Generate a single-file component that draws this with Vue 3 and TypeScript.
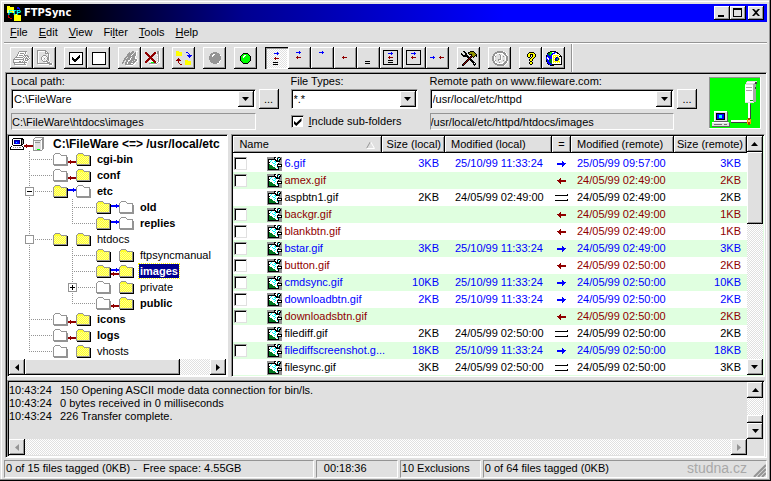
<script setup lang="ts">
import { h, ref, type FunctionalComponent } from 'vue'

type Dir = 'left' | 'right' | 'both' | 'none'

const palette: Record<string, string> = {
  k: '#000', w: '#fff', g: '#949494', l: '#e0e0e0', y: '#ff0', Y: '#909000', b: '#00f',
  n: '#000090', r: '#900000', G: '#0f0', d: '#007820', c: '#0ff', t: '#008888', o: '#f90',
}

/* Draws a small bitmap glyph, one rect for each run of equal cells. */
const Pix: FunctionalComponent<{ rows: string[] }> = ({ rows }) => {
  const rects = rows.flatMap((row, y) =>
    [...row.matchAll(/([a-zA-Z])\1*/g)].map((m) =>
      h('rect', { x: m.index, y, width: m[0].length, height: 1, fill: palette[m[1]] }),
    ),
  )
  return h(
    'svg',
    { width: rows[0].length, height: rows.length, 'shape-rendering': 'crispEdges', 'aria-hidden': 'true' },
    rects,
  )
}
Pix.props = ['rows']

const art: Record<string, string[]> = {
  print: [
    '......gggggggg...',
    '.....gwwwwwwgw...',
    '.....gwggggwgw...',
    '....gwwwwwwgw....',
    '....gwggggwgggg..',
    '...gwwwwwwgwgwgg.',
    '..ggggggggwgwgwgw',
    '.gwwwwwwwwgwgggwg',
    'gggggggggggwgwggw',
    'gwwwwwwwwwgwgggw.',
    'gwwwwwggwgwgwww..',
    'ggggggggggggggw..',
    '.gwwwwwwwwwgww...',
    '.ggggggggggggw...',
    '..wwwwwwwwwwww...',
  ],
  preview: [
    'ggggggggg.......',
    'gwwwwwwwgg......',
    'gw......gwg.....',
    'gw......gggg....',
    'gw........wgw...',
    'gw....ggg..gw...',
    'gw...gwwwg.gw...',
    'gw..gw.w.wggw...',
    'gw..gwwgw.ggw...',
    'gw..gw...wggw...',
    'gw...gw.wg.gw...',
    'gw....gggggw....',
    'gw......wwgggw..',
    'gggggggggggggggw',
    '.wwwwwwwwwwwgggw',
    '.............ww.',
  ],
  tick: [
    'kkkkkkkkkkkkkk',
    'kwwwwwwwwwwwwk',
    'kwwwwwwwwwwwwk',
    'kwwwwwwwwwkwwk',
    'kwwwwwwwwkkwwk',
    'kwwkwwwwkkkwwk',
    'kwwkkwwkkkwwwk',
    'kwwkkkkkkwwwwk',
    'kwwwkkkkwwwwwk',
    'kwwwwkkwwwwwwk',
    'kwwwwwwwwwwwwk',
    'kwwwwwwwwwwwwk',
    'kkkkkkkkkkkkkk',
  ],
  untick: [
    'kkkkkkkkkkkkkk',
    'kwwwwwwwwwwwwk',
    'kwwwwwwwwwwwwk',
    'kwwwwwwwwwwwwk',
    'kwwwwwwwwwwwwk',
    'kwwwwwwwwwwwwk',
    'kwwwwwwwwwwwwk',
    'kwwwwwwwwwwwwk',
    'kwwwwwwwwwwwwk',
    'kwwwwwwwwwwwwk',
    'kwwwwwwwwwwwwk',
    'kwwwwwwwwwwwwk',
    'kkkkkkkkkkkkkk',
  ],
  connect: [
    '..........gg..ww',
    '.......g.ggg.gw.',
    '......ggggg.ggw.',
    '.....gggggwgggw.',
    '.....ggggwggggw.',
    '....gggggggggw..',
    '...gg.gggwgggw..',
    '..gg.gggwggggww.',
    '..ggggggwggggggw',
    '.gg.ggwwgggg.ggw',
    '.g..gg.ggg.gggww',
    'gg.ggwgggggggw..',
    'g..ggwgggwwgww..',
    '...ggggggggww...',
    '....wwwwwww.....',
  ],
  disconnect: [
    '..........llggw.',
    'rr.......rrwggw.',
    'rrr.....rrrlggw.',
    '.rrr...rrr.wlgw.',
    '..rrr.rrr..lwgw.',
    '...rrrrr...llgw.',
    '....rrr....lwgw.',
    '...rrrrr...llgw.',
    '..rrr.rrr..lwgw.',
    '.rrr...rrr.llgw.',
    'rrr.wwwwrrrlwgw.',
    'rr..llGGGrrwgww.',
    '....ggggggggw...',
    '.....wwwwwww....',
  ],
  sync: [
    'yyy.............',
    'yyyyyy....bb....',
    'yyyyyy......b...',
    'yyyyyy.......b..',
    'yyyyyy.....bbbbb',
    '............bbb.',
    '.............b..',
    '..r.............',
    '.rrr............',
    'rrrrr....yyy....',
    '..r......yyyyyy.',
    '..r......yyyyyy.',
    '...r.....yyyyyy.',
    '....rr...yyyyyy.',
  ],
  stop: [
    '....gggg....',
    '..gggggggg..',
    '.gggwwggggg.',
    '.ggwwggggggw',
    'gggwgggggggg',
    'gggggggggggg',
    'gggggggggggg',
    'gggggggggggg',
    '.ggggggggggw',
    '.gggggggggw.',
    '..ggggggggw.',
    '....ggggww..',
  ],
  go: [
    '...kkkkk...',
    '..kGGGGGk..',
    '.kGGwwGGGk.',
    'kGGwwGGGGGk',
    'kGGwGGGGGGk',
    'kGGGGGGGGGk',
    'kGGGGGGGGGk',
    'kGGGGGGGGGk',
    '.kGGGGGGGk.',
    '..kGGGGGk..',
    '...kkkkk...',
  ],
  tools: [
    '..kk.....kkkk...',
    '...kk..kkYYYYk..',
    'k...kk.kYYYYYYk.',
    'kk..kk..kkkYYYYk',
    '.kkkkkk...kYYYkk',
    '..kkkkkk.krkYk.k',
    '......kkkrk.k...',
    '.......krk......',
    '......krkkk.....',
    '.....krk.kkk....',
    '....krk...kkk...',
    '...krk.....kkk..',
    '..krk.......kwk.',
    '.krk........kkk.',
    '.kk..........k..',
  ],
  clock: [
    '.....ggggggw....',
    '...ggggggggggw..',
    '..gggwwwwwwgggw.',
    '.ggwwllgllwwggw.',
    '.ggwllllgwllwggw',
    'ggwgllllgwlglwgg',
    'ggwlllllgwlllwgg',
    'ggwlllllgwlllwgg',
    'ggwlllgggwlllwgg',
    'ggwgllgwwllglwgg',
    '.ggwlllllllllggw',
    '.ggwwllgllwwgggw',
    '..gggwwwwwwgggw.',
    '...ggggggggggw..',
    '.....gggggggw...',
  ],
  help: [
    '...kkkkk..',
    '..kyyyyyk.',
    '.kyykkkyyk',
    '.kyyk.kyyk',
    '.kyyk.kyyk',
    '..kk.kyyk.',
    '....kyyk..',
    '...kyyk...',
    '...kyyk...',
    '....kk....',
    '...kyyk...',
    '...kyyk...',
    '....kk....',
  ],
  globe: [
    '....kkkkkk......',
    '..kkGGwwbbkk....',
    '.kddGGbbbwwkk...',
    '.bddGbbwwwwwwk..',
    'kbbddbwyyyyyywk.',
    'kbbbbbwywywywkkk',
    'bwbbbbwyyynnywwk',
    'bwwbbbwywnbtnywk',
    'bbwbddwyynbGnywk',
    'kbbdddwywnnnywwk',
    'kbbdddwyyyyyyywk',
    '.bbbddwywywywywk',
    '.kbbbdwwwwwwwwwk',
    '..kbbbkkkkkkkkkk',
    '....kkkk........',
  ],
  image: [
    'gggggggkkwgkkgg',
    'gggggggkwwkcwkg',
    'gkkkkkkkkwkwkkg',
    'gkwwcwwwkkktkgg',
    'gkwcwwwcckkkkgg',
    'gkkwwcwwcwwwggg',
    'gkwwwwccwwwkggg',
    'gkdwwwwwcwkkkkk',
    'gkdddwwcwwkwwwk',
    'gkddddwwwwkkkkk',
    'gkddddddwwckggg',
    'gkdddddddwwkggg',
    'gkkkkkkkkkkkggg',
    'ggggggggggggggg',
  ],
  host: [
    '...kkkkkkkkkk.',
    '..kwwwwwwwwkkk',
    '..kwnnnnnnwkgk',
    '..kwnbbbbnwkgk',
    '..kwnbcbbnwkgk',
    '..kwnbbbbnwkgk',
    '..kwwwwwwwwkk.',
    '...kkkkkkkkk..',
    '.kwwwwwwwwwwk.',
    'kwwgwgwgwggwwk',
    'kwwwwwwwwwwwwk',
    'kkkkkkkkkkkkkk',
  ],
  server: [
    '..ggggggggg',
    '.gwwwwwwwgg',
    'gwwwwwwwggg',
    'ggggggggwgg',
    'gwllllllwgg',
    'gwggggglwgg',
    'gwllllllwgg',
    'gwllllllwgg',
    'gwllllllwgg',
    'gwllllllwgg',
    'gwllllllwgg',
    'gwllllllwgg',
    'gwllGGGlwg.',
    'ggggggggg..',
  ],
}

/* Checkered highlights inside a filled folder. */
const folderDots = Array.from({ length: 8 }, (_, row) =>
  Array.from({ length: 6 }, (_, col) => `M${1 + (row % 2) + col * 2} ${row + 3}h1v1h-1z`).join(''),
).join('')

const toolGroups = [
  [['print', 'Print'], ['preview', 'Print preview']],
  [['tick', 'Tag all'], ['untick', 'Untag all']],
  [['connect', 'Connect'], ['disconnect', 'Disconnect']],
  [['sync', 'Synchronize']],
  [['stop', 'Stop']],
  [['go', 'Go']],
]
const toolGroupsEnd = [
  [['tools', 'Options']],
  [['clock', 'Schedule']],
  [['help', 'Help'], ['globe', 'Web site']],
]

interface FilterIcon { label: string; blue?: [number, number]; red?: [number, number]; eq?: number; frame?: boolean }
const filters: FilterIcon[] = [
  { label: 'Show all', blue: [9, 6], red: [9, 11], eq: 15 },
  { label: 'Show different', blue: [8, 5], red: [8, 10] },
  { label: 'Show uploads', blue: [8, 5] },
  { label: 'Show downloads', red: [8, 10] },
  { label: 'Show equal', eq: 14 },
  { label: 'Tag all kinds', blue: [8, 6], red: [8, 10], eq: 13, frame: true },
  { label: 'Tag different', blue: [8, 6], red: [8, 10], frame: true },
  { label: 'Show one-sided', blue: [4, 10], red: [13, 10] },
]
const activeFilter = ref(0)

const menus = ['File', 'Edit', 'View', 'Filter', 'Tools', 'Help']
const menuKey = [0, 0, 0, 2, 0, 0]

interface TreeRow {
  name: string; depth: number; local: boolean; remote: boolean; dir: Dir
  box?: string; last?: boolean; bold?: boolean; selected?: boolean
}
const tree: TreeRow[] = [
  { name: 'cgi-bin', depth: 1, local: false, remote: true, dir: 'left', bold: true },
  { name: 'conf', depth: 1, local: false, remote: true, dir: 'left', bold: true },
  { name: 'etc', depth: 1, local: true, remote: false, dir: 'right', bold: true, box: '-' },
  { name: 'old', depth: 2, local: true, remote: false, dir: 'right', bold: true },
  { name: 'replies', depth: 2, local: true, remote: false, dir: 'right', bold: true, last: true },
  { name: 'htdocs', depth: 1, local: true, remote: true, dir: 'none', box: ' ' },
  { name: 'ftpsyncmanual', depth: 2, local: true, remote: true, dir: 'none' },
  { name: 'images', depth: 2, local: true, remote: true, dir: 'both', bold: true, selected: true },
  { name: 'private', depth: 2, local: false, remote: true, dir: 'none', box: '+' },
  { name: 'public', depth: 2, local: false, remote: true, dir: 'left', bold: true, last: true },
  { name: 'icons', depth: 1, local: false, remote: true, dir: 'left', bold: true },
  { name: 'logs', depth: 1, local: false, remote: true, dir: 'left', bold: true },
  { name: 'vhosts', depth: 1, local: false, remote: true, dir: 'none', last: true },
]

interface FileRow { name: string; kind: 'up' | 'down' | 'same'; size: string; local: string; remote: string; rsize: string }
const up = '25/10/99 11:33:24'
const early = '24/05/99 02:49:00'
const late = '24/05/99 02:50:00'
const files: FileRow[] = [
  { name: '6.gif', kind: 'up', size: '3KB', local: up, remote: '25/05/99 09:57:00', rsize: '3KB' },
  { name: 'amex.gif', kind: 'down', size: '', local: '', remote: early, rsize: '2KB' },
  { name: 'aspbtn1.gif', kind: 'same', size: '2KB', local: early, remote: early, rsize: '2KB' },
  { name: 'backgr.gif', kind: 'down', size: '', local: '', remote: early, rsize: '1KB' },
  { name: 'blankbtn.gif', kind: 'down', size: '', local: '', remote: early, rsize: '1KB' },
  { name: 'bstar.gif', kind: 'up', size: '3KB', local: up, remote: early, rsize: '3KB' },
  { name: 'button.gif', kind: 'down', size: '', local: '', remote: late, rsize: '2KB' },
  { name: 'cmdsync.gif', kind: 'up', size: '10KB', local: up, remote: late, rsize: '10KB' },
  { name: 'downloadbtn.gif', kind: 'up', size: '2KB', local: up, remote: late, rsize: '2KB' },
  { name: 'downloadsbtn.gif', kind: 'down', size: '', local: '', remote: late, rsize: '2KB' },
  { name: 'filediff.gif', kind: 'same', size: '2KB', local: late, remote: late, rsize: '2KB' },
  { name: 'filediffscreenshot.g...', kind: 'up', size: '18KB', local: up, remote: late, rsize: '18KB' },
  { name: 'filesync.gif', kind: 'same', size: '3KB', local: late, remote: late, rsize: '3KB' },
]

const log = [
  ['10:43:24', '150 Opening ASCII mode data connection for bin/ls.'],
  ['10:43:24', '0 bytes received in 0 milliseconds'],
  ['10:43:24', '226 Transfer complete.'],
]
const includeSub = ref(true)
</script>

<template>
  <div class="window">
    <header class="title">
      <svg class="logo" width="15" height="15" aria-hidden="true" shape-rendering="crispEdges">
        <path d="M0 0h3v1h4v6H0zM7 8h3v1h4v6H7z" fill="#ff0" />
        <path d="M1 9h1v2h1v1h2v1H3v-1H1z" fill="#c00000" />
        <path d="M10 1h2v1h1v2h-1V3h-2z" fill="#00f" />
        <text x="1" y="9" class="logo-text">FTP</text>
      </svg>
      <h1>FTPSync</h1>
      <div class="caption">
        <button class="raised" aria-label="Minimize"><svg width="12" height="10"><path d="M2 7h6v2H2z" /></svg></button>
        <button class="raised" aria-label="Maximize"><svg width="12" height="10"><path d="M1 0h9v9H1zM2 2v6h7V2z" fill-rule="evenodd" /></svg></button>
        <button class="raised close" aria-label="Close"><svg width="12" height="10"><path d="M2 1h2l2 2 2-2h2L7 4.500l3 3.500H8L6 6 4 8H2l3-3.500z" /></svg></button>
      </div>
    </header>

    <nav class="menu">
      <button v-for="(m, i) in menus" :key="m">{{ m.slice(0, menuKey[i]) }}<u>{{ m[menuKey[i]] }}</u>{{ m.slice(menuKey[i] + 1) }}</button>
    </nav>

    <div class="toolbar">
      <div v-for="(g, i) in toolGroups" :key="i" class="group">
        <button v-for="t in g" :key="t[0]" class="raised tool" :aria-label="t[1]"><Pix :rows="art[t[0]]" /></button>
      </div>
      <div class="group">
        <button
          v-for="(f, i) in filters" :key="i" class="raised tool" :class="{ pressed: i === activeFilter }"
          :aria-label="f.label" :aria-pressed="i === activeFilter" @click="activeFilter = i"
        >
          <svg width="23" height="22" shape-rendering="crispEdges" aria-hidden="true">
            <rect v-if="f.frame" x="3.5" y="3.5" width="14" height="14" fill="none" stroke="#000" />
            <path v-if="f.blue" :transform="`translate(${f.blue[0]} ${f.blue[1]})`" d="M0 0h5v1H0zM3 -1h1v3H3z" fill="#00f" />
            <path v-if="f.red" :transform="`translate(${f.red[0]} ${f.red[1]})`" d="M0 0h5v1H0zM1 -1h1v3H1z" fill="#900000" />
            <path v-if="f.eq" :transform="`translate(9 ${f.eq})`" d="M-1 0h5v1h-5zM-1 2h5v1h-5z" />
          </svg>
        </button>
      </div>
      <div v-for="(g, i) in toolGroupsEnd" :key="'e' + i" class="group">
        <button v-for="t in g" :key="t[0]" class="raised tool" :aria-label="t[1]"><Pix :rows="art[t[0]]" /></button>
      </div>
      <div class="divider"></div>
    </div>

    <main class="client">
      <section class="paths">
        <div class="field">
          <label for="local">Local path:</label>
          <div class="line">
            <span class="combo">
              <select id="local"><option>C:\FileWare</option></select>
              <span class="drop raised"><svg width="7" height="4"><path d="M0 0h7L3.500 4z" /></svg></span>
            </span>
            <button class="raised dots" aria-label="Browse local">...</button>
          </div>
          <input class="readonly" readonly value="C:\FileWare\htdocs\images" aria-label="Current local folder" />
        </div>
        <div class="field">
          <label for="types">File Types:</label>
          <div class="line">
            <span class="combo">
              <select id="types"><option>*.*</option></select>
              <span class="drop raised"><svg width="7" height="4"><path d="M0 0h7L3.500 4z" /></svg></span>
            </span>
          </div>
          <label class="check"><input v-model="includeSub" type="checkbox" class="box" /><span><u>I</u>nclude sub-folders</span></label>
        </div>
        <div class="field">
          <label for="remote">Remote path on www.fileware.com:</label>
          <div class="line">
            <span class="combo">
              <select id="remote"><option>/usr/local/etc/httpd</option></select>
              <span class="drop raised"><svg width="7" height="4"><path d="M0 0h7L3.500 4z" /></svg></span>
            </span>
            <button class="raised dots" aria-label="Browse remote">...</button>
          </div>
          <input class="readonly" readonly value="/usr/local/etc/httpd/htdocs/images" aria-label="Current remote folder" />
        </div>
        <svg class="link" width="52" height="52" shape-rendering="crispEdges" role="img" aria-label="Connected">
          <rect width="52" height="52" fill="#fff" /><path d="M0 0h51v1H1v50H0z" fill="#949494" />
          <rect x="1" y="1" width="50" height="50" fill="#0f0" />
          <path d="M38 4h10v2h-1v19h-2v1h-9V7h1V5h1z" fill="#e0e0e0" />
          <path d="M36 8h8v17h-8zM38 5h8v1h-8z" fill="#fff" />
          <path d="M44 7h1v18h-1zM45 6h2v19h-2zM37 10h6v1h-6zM37 13h6v1h-6z" fill="#a8a8a8" />
          <path d="M46 5h2v2h-2zM46 10h1v2h-1z" fill="#404040" />
          <path d="M41 23h3v1h-3z" fill="#0a0" />
          <path d="M39 26h2v17h-2zM22 43h16v2H22z" fill="#fff" />
          <path d="M41 27h1v15h-1zM22 45h16v1H22z" fill="#404040" />
          <path d="M38 42h4v5h-4z" fill="#f90" /><path d="M39 41h2v7h-2z" fill="#b04000" /><path d="M39 43h2v2h-2z" fill="#ffd080" />
          <path d="M5 34h13v10H5zM3 45h17v4H3z" fill="#e0e0e0" />
          <path d="M5 34h13v1H5zM5 35h1v9H5zM3 45h16v1H3z" fill="#fff" />
          <path d="M18 35h1v9h-1zM5 44h14v1H5zM20 46h1v3h-1zM3 49h18v1H3z" fill="#606060" />
          <path d="M7 36h9v7H7z" fill="#000" /><path d="M8 37h7v5H8z" fill="#00f" /><path d="M10 38h3v3h-3z" fill="#0ff" />
          <path d="M5 47h8v1H5zM15 47h3v1h-3z" fill="#707070" />
        </svg>
      </section>

      <section class="middle">
        <div class="tree sunken">
          <div class="nodes" role="tree">
            <div class="node root" role="treeitem">
              <Pix :rows="art.host" />
              <svg width="9" height="16" shape-rendering="crispEdges"><path d="M0 9h2V8h1v1h6v2H3v1H2v-1H0z" fill="#900000" /></svg>
              <Pix :rows="art.server" />
              <span class="name bold">C:\FileWare &lt;=&gt; /usr/local/etc</span>
            </div>
            <div v-for="n in tree" :key="n.name" class="node" role="treeitem">
              <svg v-if="n.depth === 2" width="43" height="16" class="guide"><path d="M20.500 0v16" /></svg>
              <svg width="43" height="16" class="guide">
                <path :d="n.last ? 'M20.500 0v9' : 'M20.500 0v16'" /><path d="M20 8.500h23" />
                <g v-if="n.box">
                  <rect x="16.5" y="4.5" width="8" height="8" class="expander" />
                  <path v-if="n.box === '-'" d="M18 8h5v1h-5z" class="sign" />
                  <path v-if="n.box === '+'" d="M18 8h5v1h-5zM20 6h1v5h-1z" class="sign" />
                </g>
              </svg>
              <svg width="40" height="16" shape-rendering="crispEdges">
                <g v-for="(on, k) in [n.local, n.remote]" :key="k" :transform="`translate(${1 + k * 23} 2)`">
                  <path v-if="on" d="M14 3h1v10H1v-1h13z" fill="#000" />
                  <path d="M.5 11.500v-9l2-2h4l2 2h5v9z" :fill="on ? '#ffff30' : '#fff'" />
                  <path v-if="on" :d="folderDots" fill="#ffff90" />
                  <path d="M.5 11.500v-9l2-2h4l2 2h5v9z" fill="none" stroke="#949494" />
                  <path v-if="!on" d="M1 12.500h13.500V4" fill="none" stroke="#949494" />
                </g>
                <path v-if="n.dir === 'right' || n.dir === 'both'" d="M16 6h5V5h1v1h2v2h-2v1h-1V8h-5z" fill="#00f" />
                <path v-if="n.dir === 'left' || n.dir === 'both'" d="M24 10h-5V9h-1v1h-2v2h2v1h1v-1h5z" fill="#900000" />
              </svg>
              <span class="name" :class="{ bold: n.bold, selected: n.selected }">{{ n.name }}</span>
            </div>
          </div>
          <div class="hbar">
            <span class="raised sb"><svg width="4" height="7"><path d="M4 0v7L0 3.500z" /></svg></span>
            <span class="raised thumb"></span><span class="rest"></span>
            <span class="raised sb"><svg width="4" height="7"><path d="M0 0v7l4-3.500z" /></svg></span>
          </div>
        </div>

        <div class="list sunken">
          <div class="rows">
            <table>
              <colgroup><col /><col class="c-size" /><col class="c-mod" /><col class="c-eq" /><col class="c-rmod" /><col class="c-rsize" /></colgroup>
              <thead>
                <tr>
                  <th><span class="sort">Name<svg width="9" height="8"><path d="M.5 7.500L4.500.5" stroke="#949494" /><path d="M4.500.5l4 7h-8" stroke="#fff" fill="none" /></svg></span></th>
                  <th class="num">Size (local)</th><th>Modified (local)</th><th class="mid">=</th><th>Modified (remote)</th><th class="num">Size (remote)</th>
                </tr>
              </thead>
              <tbody>
                <tr v-for="f in files" :key="f.name" :class="f.kind">
                  <td>
                    <div class="file">
                      <input v-if="f.kind !== 'same'" type="checkbox" class="box" :aria-label="'Tag ' + f.name" /><span v-else class="nobox"></span>
                      <Pix :rows="art.image" /><span>{{ f.name }}</span>
                    </div>
                  </td>
                  <td class="num">{{ f.size }}</td>
                  <td class="date">{{ f.local }}</td>
                  <td class="mid">
                    <svg width="13" height="10" shape-rendering="crispEdges">
                      <path v-if="f.kind === 'up'" d="M2 4h5V2h1v1h1v1h2v1h-1v1H9v1H8v1H7V6H2z" fill="#00f" />
                      <path v-else-if="f.kind === 'down'" d="M11 4H6V2H5v1H4v1H2v1h1v1h1v1h1v1h1V6h5z" fill="#900000" />
                      <path v-else d="M0 2h12V1h1v2H0zM0 7h12V6h1v2H0z" fill="#000" />
                    </svg>
                  </td>
                  <td class="rdate">{{ f.remote }}</td>
                  <td class="num">{{ f.rsize }}</td>
                </tr>
              </tbody>
            </table>
          </div>
          <div class="vbar">
            <span class="raised sb"><svg width="7" height="4"><path d="M3.500 0L7 4H0z" /></svg></span>
            <span class="raised thumb"></span><span class="rest"></span>
            <span class="raised sb"><svg width="7" height="4"><path d="M0 0h7L3.500 4z" /></svg></span>
          </div>
        </div>
      </section>

      <section class="log sunken">
        <div class="log-main">
          <div class="lines"><p v-for="(l, i) in log" :key="i"><span class="time">{{ l[0] }}</span>{{ l[1] }}</p></div>
          <div class="hbar">
            <span class="raised sb off"><svg width="4" height="7"><path d="M4 0v7L0 3.500z" /></svg></span>
            <span class="rest"></span>
            <span class="raised sb off"><svg width="4" height="7"><path d="M0 0v7l4-3.500z" /></svg></span>
          </div>
        </div>
        <div class="vbar">
          <span class="raised sb"><svg width="7" height="4"><path d="M3.500 0L7 4H0z" /></svg></span>
          <span class="rest"></span><span class="raised thumb"></span>
          <span class="raised sb"><svg width="7" height="4"><path d="M0 0h7L3.500 4z" /></svg></span>
        </div>
      </section>
    </main>

    <footer class="status">
      <span class="tagged">0 of 15 files tagged (0KB) -&nbsp; Free space: 4.55GB</span>
      <span class="elapsed">00:18:36</span>
      <span class="excl">10 Exclusions</span>
      <span class="remote">0 of 64 files tagged (0KB)</span>
      <svg class="grip" width="13" height="13"><path d="M1 13L13 1M5 13l8-8M9 13l4-4" stroke="#949494" stroke-width="2" /></svg>
      <span class="mark">studna.cz</span>
    </footer>
  </div>
</template>

<style>
body { background: #e0e0e0; }
</style>

<style scoped>
* { box-sizing: border-box; }
.window {
  position: relative; display: flex; flex-direction: column; height: 100vh; min-height: 440px;
  padding: 4px 4px 3px; background: #e0e0e0; color: #000;
  font: 11px/13px "Liberation Sans", Arial, sans-serif;
  box-shadow: inset -1px -1px #000, inset -2px -2px #949494, inset 1px 1px #e0e0e0, inset 2px 2px #fff;
}
svg { display: block; flex: none; }
button, input, select { margin: 0; font: inherit; color: inherit; }
.raised {
  display: grid; place-items: center; padding: 0; border: 0; border-radius: 0; background: #e0e0e0;
  box-shadow: inset -1px -1px #000, inset 1px 1px #fff, inset -2px -2px #949494;
}
.sunken { border: 1px solid; border-color: #949494 #fff #fff #949494; box-shadow: inset 1px 1px #000; padding: 1px; }

.title {
  display: flex; align-items: center; gap: 2px; height: 18px; flex: none; padding: 0 3px;
  background: linear-gradient(90deg, #000 0, #000 60px, #000090 240px, #0000ff 500px); color: #fff;
}
.title h1 { margin: 0; flex: 1; font: bold 11px/18px "DejaVu Sans Condensed", "DejaVu Sans", sans-serif; }
.logo-text { font: bold 7px "Liberation Sans", sans-serif; fill: #0ff; }
.caption { display: flex; }
.caption button { width: 16px; height: 14px; }
.caption .close { margin-left: 2px; }

.menu { display: flex; gap: 1px; height: 21px; flex: none; padding-left: 1px; border-bottom: 1px solid #949494; }
.menu button { padding: 0 5px; border: 0; background: none; line-height: 20px; }

.toolbar { display: flex; gap: 8px; flex: none; height: 29px; padding: 0 6px; border-top: 1px solid #fff; }
.group { display: flex; padding-top: 3px; }
.tool { width: 23px; height: 22px; }
.pressed {
  background: repeating-conic-gradient(#fff 0 25%, #e0e0e0 0 50%) 0 0 / 2px 2px;
  box-shadow: inset 1px 1px #000, inset 2px 2px #949494, inset -1px -1px #fff;
}
.divider { width: 2px; margin-left: -2px; border-left: 1px solid #949494; background: #fff; }

.client {
  display: flex; flex-direction: column; flex: 1; min-height: 0; margin-left: 1px;
  border: 1px solid; border-color: #949494 #fff #fff #949494; box-shadow: inset 1px 1px #000; padding: 1px 1px 0;
}
.paths {
  display: grid; grid-template-columns: minmax(0, 1fr) 127px minmax(0, 1fr) 52px; gap: 12px;
  flex: none; height: 60px; padding: 1px 4px 0;
}
.field { display: flex; flex-direction: column; min-width: 0; }
.line { display: flex; gap: 3px; height: 20px; margin: 1px 0 4px; }
.combo {
  display: grid; flex: 1; min-width: 0; grid-template-columns: minmax(0, 1fr) 16px; background: #fff;
  padding: 1px; border: 1px solid; border-color: #949494 #fff #fff #949494; box-shadow: inset 1px 1px #000;
}
.combo select {
  grid-area: 1 / 1 / 2 / 3; appearance: none; border: 0; border-radius: 0; padding: 0 18px 0 0;
  margin: 1px 0 0 1px; background: transparent; outline: 0; min-width: 0;
}
.drop { grid-area: 1 / 2; pointer-events: none; }
.dots { width: 20px; }
.readonly {
  width: calc(100% - 23px); height: 17px; padding: 0; background: #e0e0e0; outline: 0;
  border: 1px solid; border-color: #949494 #fff #fff #949494; border-radius: 0;
}
.check { display: flex; align-items: center; gap: 5px; height: 17px; }
.box {
  appearance: none; display: grid; flex: none; width: 13px; height: 13px; background: #fff; border-radius: 0;
  border: 1px solid; border-color: #949494 #e0e0e0 #e0e0e0 #949494; box-shadow: inset 1px 1px #000;
}
.box:checked::before {
  content: ""; width: 8px; height: 8px; margin: 2px; background: #000;
  clip-path: polygon(0 30%, 35% 62%, 100% 0, 100% 38%, 35% 100%, 0 68%);
}
.link { margin-top: 2px; }

.middle { display: grid; grid-template-columns: minmax(0, 222fr) minmax(0, 535fr); gap: 3px; flex: 1; min-height: 0; }
.tree { display: flex; flex-direction: column; background: #fff; min-height: 0; }
.nodes { flex: 1; min-height: 0; overflow: hidden; }
.node { display: flex; align-items: center; height: 16px; white-space: nowrap; }
.root { height: 15px; padding-left: 1px; }
.root .name { margin-left: 8px; font-size: 12px; }
.name { line-height: 14px; padding: 0 1px; margin-left: 4px; }
.bold { font-weight: bold; }
.selected { background: #000090; color: #fff; outline: 1px dotted #ff0; }
.guide { stroke: #949494; stroke-dasharray: 1 1; fill: none; }
.guide .expander { fill: #fff; stroke-dasharray: none; }
.guide .sign { fill: #000; stroke: none; }

.hbar, .vbar { display: flex; flex: none; background: repeating-conic-gradient(#fff 0 25%, #e0e0e0 0 50%) 0 0 / 2px 2px; }
.hbar { height: 16px; }
.vbar { flex-direction: column; width: 16px; }
.sb { width: 16px; height: 16px; flex: none; }
.off { fill: #949494; }
.rest { flex: 1; }
.hbar .thumb { flex: 5; }
.vbar .thumb { flex: 0 0 72px; }

.list { display: flex; background: #e0ffe0; min-height: 0; }
.rows { flex: 1; min-width: 0; overflow: hidden; }
table { width: 100%; table-layout: fixed; border-collapse: separate; border-spacing: 0; }
.c-size { width: 63px; } .c-mod { width: 107px; } .c-eq { width: 19px; } .c-rmod { width: 103px; } .c-rsize { width: 73px; }
th {
  height: 17px; padding: 0 5px 0 6px; background: #e0e0e0; font-weight: normal; text-align: left; white-space: nowrap;
  box-shadow: inset -1px -1px #000, inset 1px 1px #fff, inset -2px -2px #949494;
}
td { height: 17px; padding: 0; white-space: nowrap; }
tbody tr { background: #fff; }
tbody tr:nth-child(even) { background: #e0ffe0; }
tbody tr:first-child td { height: 19px; padding-top: 2px; }
.sort { display: flex; justify-content: space-between; padding-right: 2px; align-items: center; }
th.num { text-align: right; padding: 0 4px 0 0; }
td.num { text-align: right; padding-right: 6px; }
th.mid { text-align: center; padding: 0; }
td.mid svg { margin: 0 auto; }
td.date { padding-left: 10px; }
td.rdate { padding-left: 6px; }
.file { display: flex; align-items: center; padding-left: 1px; }
.nobox { width: 13px; flex: none; }
.file svg { margin: 0 2px 0 20px; }
.up { color: #00f; }
.down { color: #900000; }

.log { display: flex; flex: none; height: 77px; margin-top: 3px; }
.log-main { display: flex; flex-direction: column; flex: 1; min-width: 0; }
.lines { flex: 1; padding: 2px 0; }
.lines p { margin: 0; white-space: nowrap; }
.time { display: inline-block; width: 51px; }
.log .vbar { margin-bottom: 16px; }
.log .vbar .thumb { flex: 0 0 8px; }

.status { position: relative; display: flex; gap: 2px; flex: none; height: 18px; margin-top: 2px; line-height: 15px; }
.status > span:not(.mark) {
  border: 1px solid; border-color: #949494 #fff #fff #949494; padding: 0 1px; white-space: nowrap; overflow: hidden;
}
.tagged { flex: 311; }
.elapsed { flex: 0 0 82px; text-indent: 6px; }
.excl { flex: 0 0 81px; }
.remote { flex: 285; }
.grip { position: absolute; right: 1px; bottom: 1px; }
.mark { position: absolute; right: 20px; bottom: 1px; font-size: 14px; line-height: 18px; color: #a8a8a8; }
</style>
